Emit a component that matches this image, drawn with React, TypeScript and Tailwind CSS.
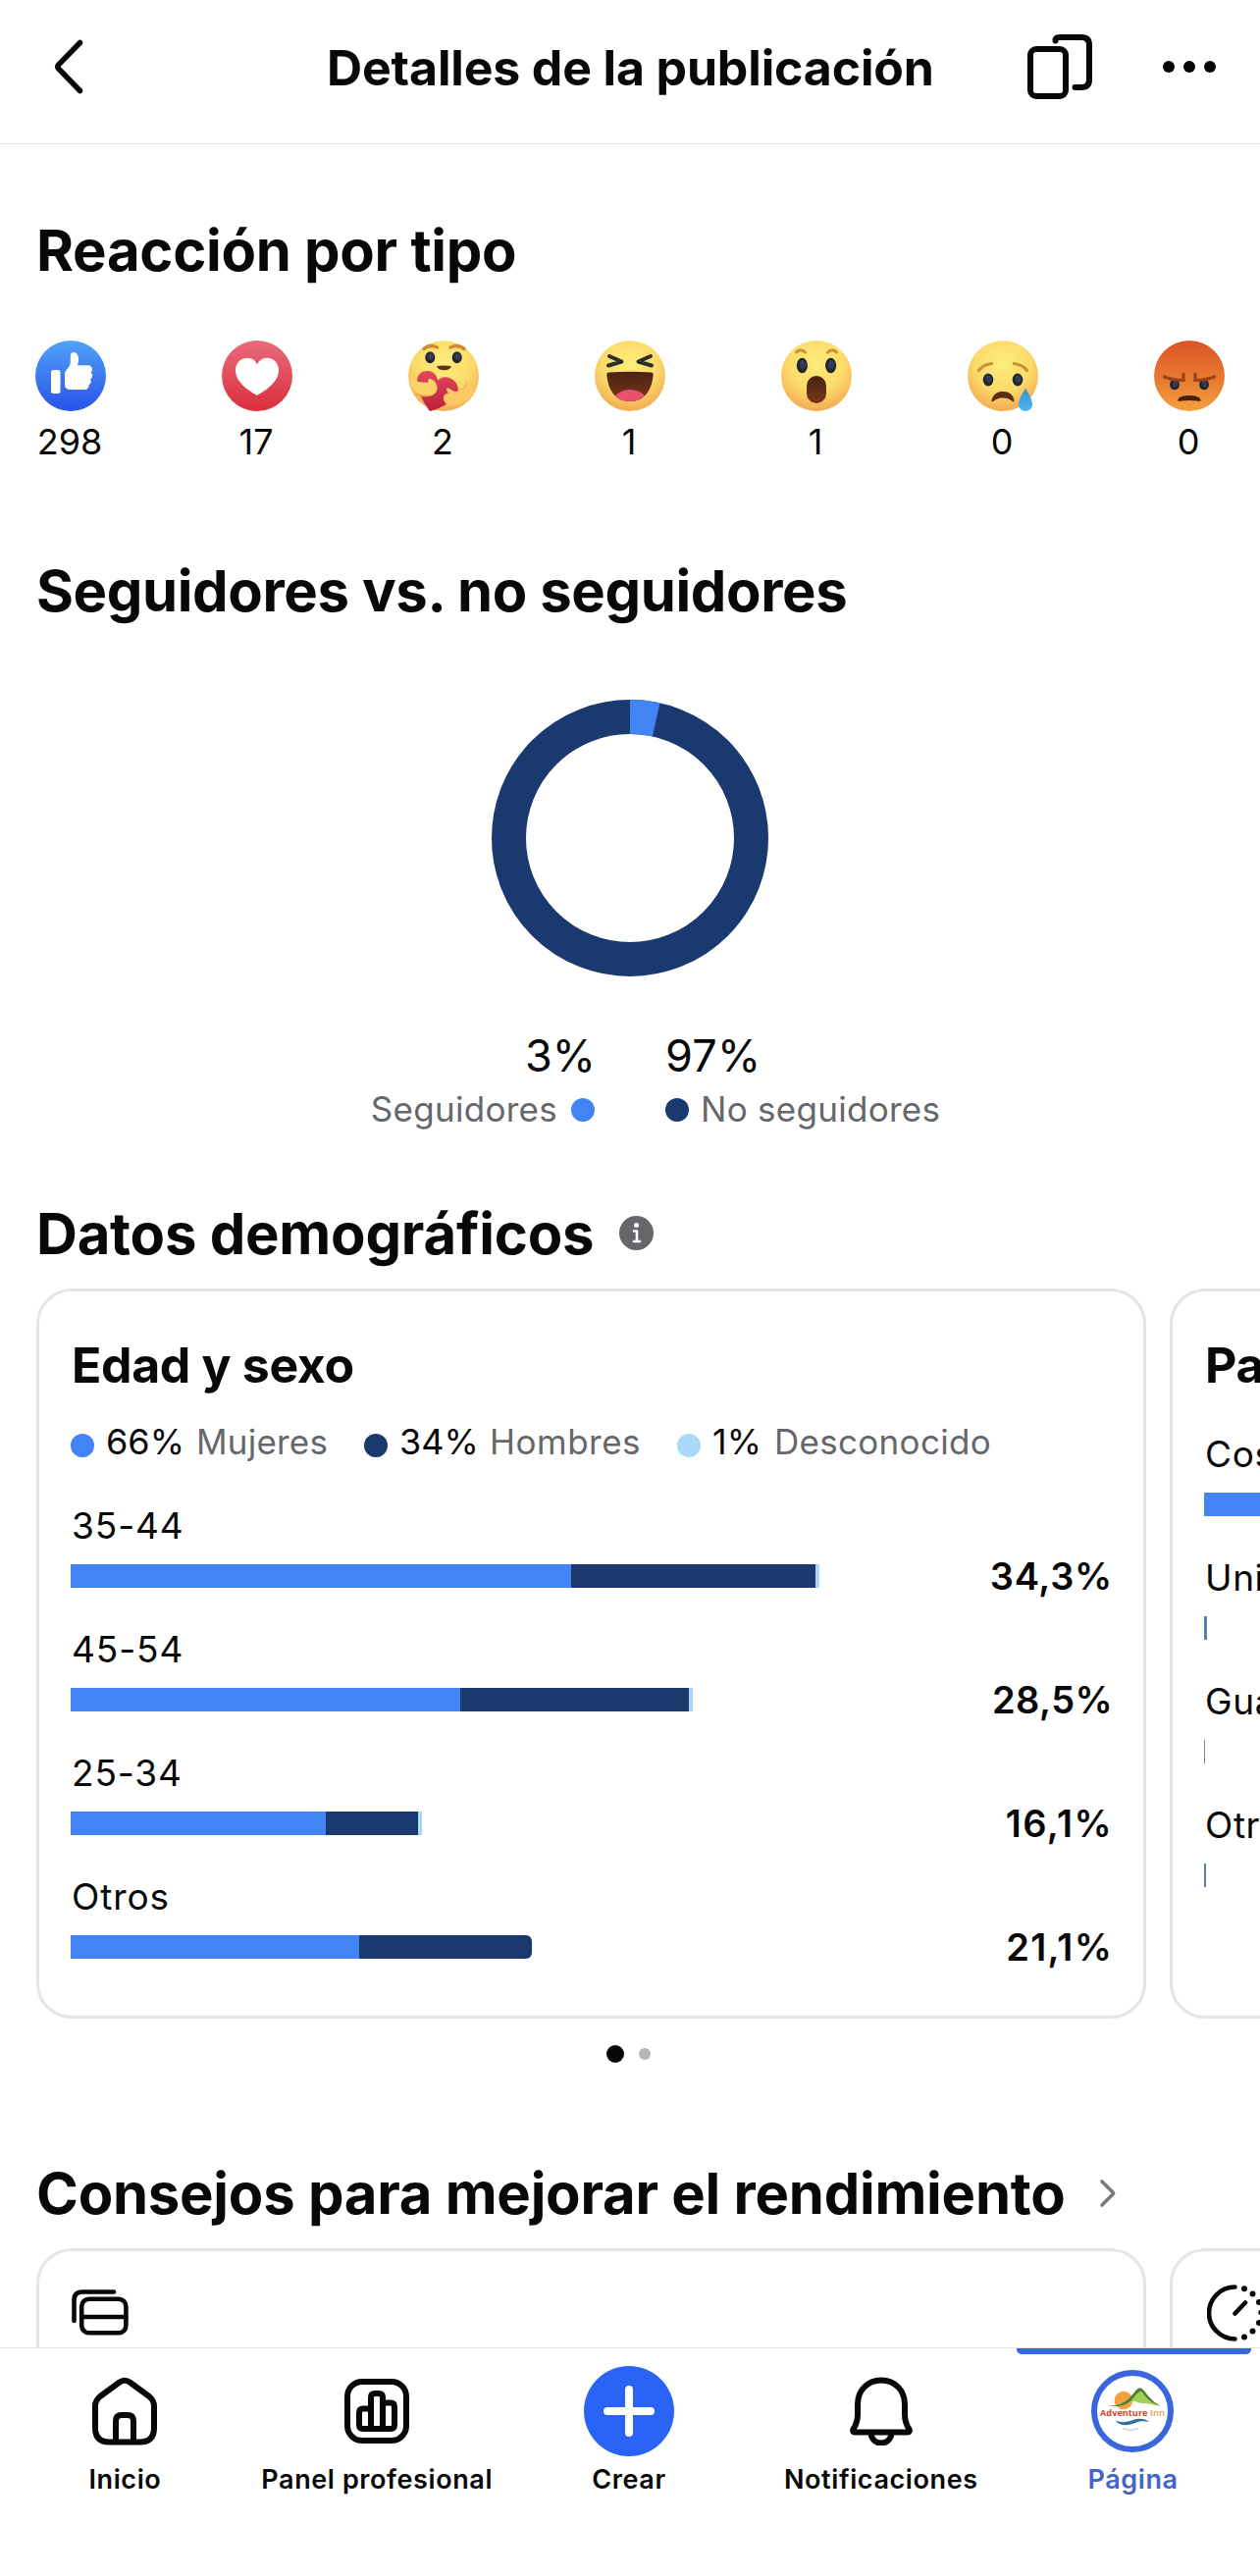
import React from "react";

const ageRows = [
  { label: "35-44", women: 510, men: 249, unknown: 4, value: "34,3%", spacing: "tracking-[0.7px]" },
  { label: "45-54", women: 396.5, men: 233.5, unknown: 4, value: "28,5%", spacing: "tracking-[0.4px]" },
  { label: "25-34", women: 260, men: 93.5, unknown: 4, value: "16,1%", spacing: "tracking-[1.4px]" },
  { label: "Otros", women: 294, men: 175.5, unknown: 0, value: "21,1%", spacing: "tracking-[1.2px]" },
];

const countryRows = [
  { label: "Costa Rica", width: 700, color: "bg-[#4384f4]" },
  { label: "United States", width: 3, color: "bg-[#4f7fc4]" },
  { label: "Guatemala", width: 1, color: "bg-[#6f8090]" },
  { label: "Otros", width: 2, color: "bg-[#5580ac]" },
];

function Gradients() {
  return (
    <svg width="0" height="0" className="absolute">
      <defs>
        <linearGradient id="blue" x1="0" y1="0" x2="0" y2="1">
          <stop offset="0" stopColor="#4fa3f7" />
          <stop offset="1" stopColor="#2a52ea" />
        </linearGradient>
        <linearGradient id="red" x1="0" y1="0" x2="0" y2="1">
          <stop offset="0" stopColor="#ea6a7c" />
          <stop offset="1" stopColor="#da2f3c" />
        </linearGradient>
        <radialGradient id="yellow" cx="0.5" cy="0.32" r="0.72">
          <stop offset="0" stopColor="#fdec7c" />
          <stop offset="0.55" stopColor="#fbdb6a" />
          <stop offset="1" stopColor="#f2a552" />
        </radialGradient>
        <linearGradient id="angry" x1="0" y1="0" x2="0" y2="1">
          <stop offset="0" stopColor="#dc5426" />
          <stop offset="0.55" stopColor="#e87a30" />
          <stop offset="1" stopColor="#f4a040" />
        </linearGradient>
        <linearGradient id="heart" x1="0" y1="0" x2="0" y2="1">
          <stop offset="0" stopColor="#e4485c" />
          <stop offset="1" stopColor="#b81f3a" />
        </linearGradient>
        <linearGradient id="mouth" x1="0" y1="0" x2="0" y2="1">
          <stop offset="0" stopColor="#4a2413" />
          <stop offset="1" stopColor="#7c3416" />
        </linearGradient>
        <linearGradient id="tear" x1="0" y1="0" x2="0" y2="1">
          <stop offset="0" stopColor="#3d8fc4" />
          <stop offset="1" stopColor="#4db5fa" />
        </linearGradient>
      </defs>
    </svg>
  );
}

function Eye({ x, y, rx = 5.3, ry = 7 }: any) {
  return (
    <g>
      <ellipse cx={x} cy={y} rx={rx} ry={ry} fill="#23262f" />
      <ellipse cx={x + 0.5} cy={y - 1} rx={rx * 0.55} ry={ry * 0.55} fill="#333c58" />
    </g>
  );
}

function Like() {
  return (
    <>
      <circle cx="36" cy="36" r="36" fill="url(#blue)" />
      <rect x="16" y="30" width="9.5" height="24" rx="2.5" fill="#fff" />
      <path
        d="M30 34c0-1.500.5-2.500 1.500-3.700 2.500-3 4.300-5 4.300-8.300v-6c0-2.500 1.200-4 3.400-4 3.400 0 4.900 4 4.900 7 0 2.500-.6 4.500-1.100 6.200H53.500c2.700 0 4.500 1.800 4.500 4 0 1.500-.6 2.600-1.600 3.300 1.300.8 1.800 2 1.800 3.300 0 1.700-.9 3-2.300 3.600.7.700 1 1.600.9 2.600-.1 1.500-1 2.700-2.400 3.200.5 2.700-1.200 4.800-4.400 4.800H36c-4 0-6-1.500-6-5z"
        fill="#fff"
      />
    </>
  );
}

function Love() {
  return (
    <>
      <circle cx="36" cy="36" r="36" fill="url(#red)" />
      <path
        d="M36 24.500c-2-4.500-5.500-6.800-10-6.800-7 0-12 5.300-12 12.800 0 11 12.500 20.500 22 25.300 9.500-4.800 22-14.300 22-25.300 0-7.500-5-12.800-12-12.800-4.500 0-8 2.300-10 6.800z"
        fill="#fff"
      />
    </>
  );
}

function Care() {
  return (
    <>
      <circle cx="36" cy="36" r="36" fill="url(#yellow)" />
      <path d="M16 8.500q6-5 13.500-1.500M43 7q7.500-3.500 14 1.500" stroke="#cd8a35" strokeWidth="3.500" strokeLinecap="round" fill="none" />
      <Eye x={22.3} y={17.3} rx={5} ry={6} />
      <Eye x={49.7} y={17.3} rx={5} ry={6} />
      <path d="M29 26.300q7.500-1.600 15 0-1.500 4-7.500 4t-7.500-4z" fill="#5a3216" />
      <path
        d="M22 72C16 64 8 50 9 40c.8-6 5-9 10.500-9 6 0 9.500 4 10.500 9.500 3-3 8-4.500 13-2 6 3 9 8 7.500 14C48.500 61 34 69 22 72z"
        fill="url(#heart)"
      />
      <path d="M3.500 36c2 5 6 6 11 6.500l6.500.3c-1.500-1.500-1-3.800 1-3.800 4.500 1 7.500 5 7.500 9.500 0 4.500-4.500 8-10.500 8C11 56.500 4 50 2 43z" fill="#fcd268" />
      <path d="M8 54c6 4 17 4 20.500-2" stroke="#e3a04a" strokeWidth="1.200" fill="none" />
      <path d="M62 40c1 6-4 11-12 12-3.500.4-5.500-1.500-9-3.500-1.500-.6-2.600 1-1.500 2.800l1.500 2.500c-3.500 0-5.500 2.500-5 6 .8 4.700 5.500 7 11 6.500C58 65 66 58 68 48z" fill="#fcca62" />
      <path d="M60 41c0 5-4 9-10 10.500" stroke="#eeb152" strokeWidth="1.200" fill="none" />
    </>
  );
}

function Haha() {
  return (
    <>
      <circle cx="36" cy="36" r="36" fill="url(#yellow)" />
      <path d="M15 16l12.500 5.500L14 25.500M57 16l-12.500 5.500L58 25.500" stroke="#2b2e2c" strokeWidth="4" strokeLinecap="round" strokeLinejoin="round" fill="none" />
      <path d="M14 32.500q22-1.500 44 0 2 0 1.700 2.500C58 52 50 62 36 62S14 52 12.300 35q-.2-2.500 1.700-2.500z" fill="url(#mouth)" />
      <path d="M21 56.500Q26 50 36 50t15 6.500Q45 62 36 62t-15-5.500z" fill="#e8506c" />
    </>
  );
}

function Wow() {
  return (
    <>
      <circle cx="36" cy="36" r="36" fill="url(#yellow)" />
      <path d="M15.500 12q4.500-4.500 9 0M47.500 12q4.500-4.500 9 0" stroke="#cd8f35" strokeWidth="3" strokeLinecap="round" fill="none" />
      <Eye x={21.4} y={25.5} rx={5.6} ry={7.7} />
      <Eye x={50.6} y={25.5} rx={5.6} ry={7.7} />
      <rect x="26" y="36" width="20" height="28" rx="10" fill="url(#mouth)" />
    </>
  );
}

function Sad() {
  return (
    <>
      <circle cx="36" cy="36" r="36" fill="url(#yellow)" />
      <path d="M11.500 30.500Q16 24.500 24.500 23.500M60.500 30.500Q56 24.500 47.500 23.500" stroke="#cd8f35" strokeWidth="3.200" strokeLinecap="round" fill="none" />
      <Eye x={21} y={40} rx={5.3} ry={6.5} />
      <Eye x={51} y={40} rx={5.3} ry={6.5} />
      <path d="M24.500 61C25.500 55 30 52 36 52s10.500 3 11.500 9c.2 1.500-.8 1.500-2 .7C42.500 59.500 40 58.500 36 58.500s-6.500 1-9.500 3.200c-1.200.8-2.200.8-2-.7z" fill="#5a2c14" />
      <path d="M59 48.500c-2.500 5-7 11-7 16.500 0 4 3 7 7 7s7-3 7-7c0-5.500-4.500-11.500-7-16.500z" fill="url(#tear)" />
    </>
  );
}

function Angry() {
  return (
    <>
      <circle cx="36" cy="36" r="36" fill="url(#angry)" />
      <Eye x={21} y={45} rx={5} ry={5.3} />
      <Eye x={51} y={45} rx={5} ry={5.3} />
      <path d="M10.500 37q9 3.500 20 3.500M30 34v6M61.500 37q-9 3.500-20 3.500M42 34v6" stroke="#9c4216" strokeWidth="3.200" strokeLinecap="round" fill="none" />
      <path d="M24.500 60C26 57 30 56 36 56s10 1 11.500 4c.5 1.500-.5 2-2 1.800-6-1-13-1-19 0-1.500.2-2.500-.3-2-1.800z" fill="#4a2110" />
    </>
  );
}

const reactions = [
  { icon: <Like />, count: 298 },
  { icon: <Love />, count: 17 },
  { icon: <Care />, count: 2 },
  { icon: <Haha />, count: 1 },
  { icon: <Wow />, count: 1 },
  { icon: <Sad />, count: 0 },
  { icon: <Angry />, count: 0 },
];

function Header() {
  return (
    <header className="flex h-[147px] shrink-0 items-center border-b border-[#e6e7e7] pb-[10px]">
      <svg className="ml-[52px]" width="36" height="60" viewBox="0 0 36 60" fill="none" stroke="#080809" strokeWidth="5.500" strokeLinecap="round" strokeLinejoin="round">
        <path d="M29.500 5.500L7.500 28.200q-1.800 1.800 0 3.600L29.500 54.500" />
      </svg>
      <h1 className="mt-[1px] ml-[245px] w-[639px] text-[50px] leading-[60px] font-bold tracking-[-0.15px] whitespace-nowrap">
        Detalles de la publicación
      </h1>
      <svg className="ml-[70px]" width="76" height="76" viewBox="0 0 76 76" fill="none" stroke="#080809" strokeWidth="6" strokeLinecap="round">
        <rect x="8" y="20" width="36" height="48" rx="6" />
        <path d="M33.500 11.500q0-3.500 4-3.500H60q8 0 8 8v35q0 8-8 8H53.500" />
      </svg>
      <div className="ml-[67px] flex gap-[9px]">
        <span className="h-3 w-3 rounded-full bg-[#080809]" />
        <span className="h-3 w-3 rounded-full bg-[#080809]" />
        <span className="h-3 w-3 rounded-full bg-[#080809]" />
      </div>
    </header>
  );
}

function AgeCard() {
  return (
    <div className="h-[744px] w-[1131px] shrink-0 rounded-[36px] border-[3px] border-[#e2e6e6] pt-[45px] pl-8">
      <h3 className="ml-[1px] h-[60px] text-[50px] leading-[60px] font-bold tracking-[-0.35px]">Edad y sexo</h3>
      <div className="mt-[24px] flex h-[48px] items-center text-[36px] leading-[48px] whitespace-nowrap">
        <span className="mt-2 h-6 w-6 rounded-full bg-[#4384f4]" />
        <span className="ml-[12px] w-[92px]">66%</span>
        <span className="w-[171px] text-[35px] tracking-[0.2px] text-[#65676b]">Mujeres</span>
        <span className="mt-2 h-6 w-6 rounded-full bg-[#1a396e]" />
        <span className="ml-[12px] w-[92px]">34%</span>
        <span className="w-[191px] text-[35px] tracking-[0.5px] text-[#65676b]">Hombres</span>
        <span className="mt-2 h-6 w-6 rounded-full bg-[#a9d8fb]" />
        <span className="ml-[12px] w-[63px]">1%</span>
        <span className="text-[35px] tracking-[0.3px] text-[#65676b]">Desconocido</span>
      </div>
      <div className="mt-[40px]">
        {ageRows.map((row) => (
          <div key={row.label} className="h-[126px]">
            <div className="ml-[1px] h-[61px] text-[37px] leading-[44px] tracking-[0.9px]">{row.label}</div>
            <div className="flex h-6 items-center">
              <div className={row.unknown ? "flex h-6" : "flex h-6 overflow-hidden rounded-r-[6px]"}>
                <div className="h-6 bg-[#4384f4]" style={{ width: row.women }} />
                <div className="h-6 bg-[#1a396e]" style={{ width: row.men }} />
                <div className="h-6 bg-[#a9d8fb]" style={{ width: row.unknown }} />
              </div>
              <span className={"mr-[31px] ml-auto text-[38px] leading-[44px] font-semibold " + row.spacing}>{row.value}</span>
            </div>
          </div>
        ))}
      </div>
    </div>
  );
}

function CountryCard() {
  return (
    <div className="h-[744px] w-[1131px] shrink-0 rounded-[36px] border-[3px] border-[#e2e6e6] pt-[45px] pl-8">
      <h3 className="ml-[1px] h-[60px] text-[50px] leading-[60px] font-bold tracking-[-0.35px]">Países</h3>
      <div className="mt-[39px]">
        {countryRows.map((row) => (
          <div key={row.label} className="h-[126px]">
            <div className="ml-[1px] h-[61px] text-[37px] leading-[44px] tracking-[0.6px]">{row.label}</div>
            <div className={"h-6 " + row.color} style={{ width: row.width }} />
          </div>
        ))}
      </div>
    </div>
  );
}

function TipCards() {
  return (
    <div className="mt-6 flex shrink-0 gap-6 pl-[37px]">
      <div className="h-[300px] w-[1131px] shrink-0 rounded-[36px] border-[3px] border-[#e2e6e6] pt-[39px] pl-[33px]">
        <svg width="58" height="48" viewBox="0 0 58 48" fill="none" stroke="#080809" strokeWidth="4.600" strokeLinecap="round">
          <rect x="10.200" y="9.700" width="45.200" height="34.600" rx="7.500" />
          <path d="M10.200 28h45.200M2.500 32V11q0-8.500 8.500-8.500H43" />
        </svg>
      </div>
      <div className="h-[300px] w-[1131px] shrink-0 rounded-[36px] border-[3px] border-[#e2e6e6] pt-[34px] pl-[35px]">
        <svg width="58" height="58" viewBox="0 0 58 58" fill="none" stroke="#080809" strokeWidth="4.600" strokeLinecap="round">
          <path d="M28.500 2.500a26.500 26.500 0 0 0 0 53M28.500 29.500l10.500-11" />
          <path d="M38 4.200h.01M46.500 9.500h.01M53 18h.01M55.300 28.500h.01M53 39h.01M46.500 47.500h.01M38 53.500h.01" strokeWidth="6" />
        </svg>
      </div>
    </div>
  );
}

function PageAvatar() {
  return (
    <svg className="mr-[2px]" width="84" height="84" viewBox="0 0 84 84">
      <circle cx="42" cy="42" r="39" fill="#fff" stroke="#3a66dc" strokeWidth="6" />
      <circle cx="33" cy="31" r="9.300" fill="#f5a03c" />
      <path d="M14 36.500c12 1 20-2 27-10 4-5 6-8 9-8 4 0 8 12 20 18-8-1-12-2.500-17-2.500-6 0-8-4-13-1-8 4-15 4.500-26 3.500z" fill="#a5cf52" />
      <path d="M14 36.500c12 1 20-2 27-10 4-5 6-8 9-8 4 0 8 12 21 18.500-11-3-16-10-20-15.500-4 1-7 6-10 9.500-6 6-15 7-27 5.500z" fill="#4a8038" />
      <text x="9" y="46.500" textLength="48.500" lengthAdjust="spacingAndGlyphs" fontFamily="Open Sans, sans-serif" fontSize="9" fontWeight="700" fill="#cc4a2e">Adventure</text>
      <text x="60" y="46.500" textLength="15" lengthAdjust="spacingAndGlyphs" fontFamily="Open Sans, sans-serif" fontSize="9" fontWeight="600" fill="#dda04e">Inn</text>
      <path d="M24.500 51.500c7 2.500 11 2 18-.5 6-2 12-1.500 17 2-5-1-9-1-14 .8-8 3-16 4-21-2.300z" fill="#2f6f9f" />
      <path d="M32 59.500q8 3.500 16 0" stroke="#a8c6cf" strokeWidth="1" fill="none" />
    </svg>
  );
}

function NavItem({ icon, label, active }: any) {
  return (
    <div className="relative flex w-[256.800px] flex-col items-center">
      {active && <span className="absolute top-0 left-[10px] h-[6px] w-[239px] rounded-b-[5px] bg-[#3a66dc]" />}
      <div className="mt-[18px] flex h-[92px] items-center justify-center">{icon}</div>
      <span className={"mt-[8px] h-[32px] text-[27px] leading-[32px] font-semibold tracking-[0.6px] whitespace-nowrap " + (active ? "text-[#4464c8]" : "text-[#080809]")}>
        {label}
      </span>
    </div>
  );
}

function BottomNav() {
  const line = { fill: "none", stroke: "#080809", strokeWidth: 6, strokeLinecap: "round", strokeLinejoin: "round" } as any;
  return (
    <nav className="-ml-px flex h-[233px] shrink-0 border-t border-[#e2e3e4] bg-white">
      <NavItem
        label="Inicio"
        icon={
          <svg width="66" height="70" viewBox="0 0 66 70" {...line}>
            <path d="M3 30q0-6 5-10L27.500 5.800q5.500-4 11 0L58 20q5 4 5 10V52q0 14.500-14.500 14.500h-31Q3 66.500 3 52z" />
            <path d="M24 66V45q0-6 6-6h6q6 0 6 6v21" />
          </svg>
        }
      />
      <NavItem
        label="Panel profesional"
        icon={
          <svg width="66" height="66" viewBox="0 0 66 66" {...line}>
            <rect x="3" y="3" width="60" height="60" rx="15" />
            <path d="M27 51V19q0-4 4-4h4q4 0 4 4v32M27 30.500h-8q-4 0-4 4V47q0 4 4 4h28q4 0 4-4V28.500q0-4-4-4h-8" />
          </svg>
        }
      />
      <NavItem
        label="Crear"
        icon={
          <svg width="92" height="92" viewBox="0 0 92 92" fill="none">
            <circle cx="46" cy="46" r="46" fill="#2b63f5" />
            <path d="M46 24v44M24 46h44" stroke="#fff" strokeWidth="8" strokeLinecap="round" />
          </svg>
        }
      />
      <NavItem
        label="Notificaciones"
        icon={
          <svg width="64" height="70" viewBox="0 0 64 70" {...line}>
            <path d="M32 3.500C18 3.500 8 14 8 28v10c0 7-1.500 11-4.500 15.500-.8 1.500-.3 3 1.500 3h54c1.800 0 2.300-1.500 1.500-3C57.500 49 56 45 56 38V28C56 14 46 3.500 32 3.500z" />
            <path d="M21.500 58c1 6 5 9.500 10.500 9.500S41.500 64 42.500 58" />
          </svg>
        }
      />
      <NavItem active label="Página" icon={<PageAvatar />} />
    </nav>
  );
}

export default function App() {
  return (
    <div className="flex h-[2625px] w-[1284px] flex-col overflow-hidden bg-white font-['Inter',sans-serif] text-[#080809]">
      <Gradients />
      <Header />
      <main className="flex min-h-0 flex-1 flex-col overflow-hidden">
        <h2 className="mt-[76px] ml-[37px] h-16 shrink-0 text-[58px] leading-[64px] font-bold tracking-[-0.28px]">Reacción por tipo</h2>
        <div className="mt-[60px] flex shrink-0 justify-between px-9">
          {reactions.map((reaction, i) => (
            <div key={i} className="flex w-[72px] flex-col items-center">
              <svg width="72" height="72" viewBox="0 0 72 72">{reaction.icon}</svg>
              <span className="mt-[13px] mr-[2px] h-9 text-[36px] leading-[36px]">{reaction.count}</span>
            </div>
          ))}
        </div>

        <h2 className="mt-[102px] ml-[37px] h-16 shrink-0 text-[58px] leading-[64px] font-bold tracking-[-0.38px]">Seguidores vs. no seguidores</h2>
        <svg className="mt-[79px] shrink-0 self-center" width="282" height="282" viewBox="0 0 282 282" fill="none" strokeWidth="35">
          <circle cx="141" cy="141" r="123.500" stroke="#1a396e" />
          <path d="M141 17.500A123.500 123.500 0 0 1 167.700 20.400" stroke="#4384f4" />
        </svg>
        <div className="mt-[57px] flex h-12 shrink-0 text-[45px] leading-[48px]">
          <span className="w-[607px] text-right">3%</span>
          <span className="ml-[71px] tracking-[0.3px]">97%</span>
        </div>
        <div className="mt-[13px] flex h-9 shrink-0 items-center text-[35px] leading-[36px] tracking-[0.28px] text-[#65676b]">
          <span className="w-[568px] -translate-y-px text-right">Seguidores</span>
          <span className="ml-[14px] h-6 w-6 rounded-full bg-[#4384f4]" />
          <span className="ml-[72px] h-6 w-6 rounded-full bg-[#1a396e]" />
          <span className="ml-[12px] -translate-y-px">No seguidores</span>
        </div>

        <div className="mt-[76px] ml-[37px] flex h-16 shrink-0 items-center">
          <h2 className="w-[594px] text-[58px] leading-[64px] font-bold tracking-[-0.22px] whitespace-nowrap">Datos demográficos</h2>
          <svg width="35" height="35" viewBox="0 0 35 35" className="mb-[2px]">
            <circle cx="17.500" cy="17.500" r="17.500" fill="#65676b" />
            <circle cx="17.500" cy="9.500" r="2.500" fill="#fff" />
            <path d="M15 15.500h3v10M15 26h6" stroke="#fff" strokeWidth="2.600" strokeLinecap="round" strokeLinejoin="round" fill="none" />
          </svg>
        </div>
        <div className="mt-6 flex shrink-0 gap-6 pl-[37px]">
          <AgeCard />
          <CountryCard />
        </div>
        <div className="mt-[27px] flex h-[18px] shrink-0 items-center justify-center gap-[15px] pr-[3px]">
          <span className="h-[18px] w-[18px] rounded-full bg-[#080809]" />
          <span className="h-3 w-3 rounded-full bg-[#b4b5b7]" />
        </div>

        <div className="mt-[101px] ml-[37px] flex h-16 shrink-0 items-center">
          <h2 className="w-[1083px] text-[58px] leading-[64px] font-bold tracking-[-0.25px] whitespace-nowrap">Consejos para mejorar el rendimiento</h2>
          <svg width="18" height="30" viewBox="0 0 18 30" fill="none" stroke="#77797d" strokeWidth="3.600" strokeLinecap="round" strokeLinejoin="round">
            <path d="M3 3l11 11q1 1 0 2L3 27" />
          </svg>
        </div>
        <TipCards />
      </main>
      <BottomNav />
    </div>
  );
}
